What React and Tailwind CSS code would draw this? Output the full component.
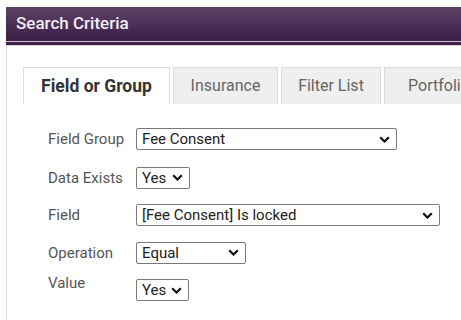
import React from 'react';

function Chevron() {
    return (
        <svg width="11" height="7" viewBox="0 0 11 7" className="shrink-0">
            <path d="M1.2 1.2l4.3 4.3 4.3-4.3" fill="none" stroke="#111" strokeWidth="2.2" />
        </svg>
    );
}

function FakeSelect({ value, width }) {
    return (
        <div
            className="flex h-[22px] items-center justify-between rounded-[2px] border border-[#7a7a7a] bg-white pr-[6px] pl-[5px] text-[15px] text-[#222]"
            style={{ width }}
        >
            <span className="whitespace-nowrap">{value}</span>
            <Chevron />
        </div>
    );
}

function Row({ label, value, width, top = false, className = '' }) {
    return (
        <div className={`flex ${top ? 'items-start' : 'items-center'} ${className}`}>
            <div className={`w-[88px] text-[15px] text-[#555] ${top ? '-mt-[7px]' : ''}`}>{label}</div>
            <FakeSelect value={value} width={width} />
        </div>
    );
}

const tabs = [
    { name: 'Field or Group', width: 147, active: true },
    { name: 'Insurance', width: 105 },
    { name: 'Filter List', width: 100 },
    { name: 'Portfolio', width: 110 },
];

export default function App() {
    return (
        <div className="h-[320px] w-[461px] overflow-hidden bg-white font-['Roboto',sans-serif]">
            <div className="ml-[6px] pt-[7px]">
                <div className="flex h-[34px] items-center bg-gradient-to-b from-[#5d4268] to-[#3c1e46] pl-[10px] text-[17px] font-medium text-[#f2eef4]">
                    Search Criteria
                </div>
                <div className="h-[1px] bg-[#cbbfd0]" />
                <div className="h-[3px] bg-[#3e2149]" />
                <div className="h-[1px] bg-[#d8d0dc]" />
                <div className="h-[300px] border-l border-[#dedede] pt-[21px]">
                    <div className="flex gap-[3px] pl-[16px]">
                        {tabs.map((tab) => (
                            <div
                                key={tab.name}
                                className={`flex h-[37px] shrink-0 items-center justify-center border border-b-0 whitespace-nowrap ${
                                    tab.active
                                        ? 'border-[#dcdcdc] bg-white text-[17.5px] font-bold text-[#333]'
                                        : 'border-[#dcdcdc] bg-[#efefef] text-[16px] text-[#666]'
                                }`}
                                style={{ width: tab.width }}
                            >
                                {tab.name}
                            </div>
                        ))}
                    </div>
                    <div className="flex flex-col pt-[24px] pl-[41px]">
                        <Row label="Field Group" value="Fee Consent" width={261} />
                        <Row label="Data Exists" value="Yes" width={54} className="mt-[16px]" />
                        <Row label="Field" value="[Fee Consent] Is locked" width={304} className="mt-[15px]" />
                        <Row label="Operation" value="Equal" width={110} className="mt-[15px]" />
                        <Row label="Value" value="Yes" width={53} top className="mt-[15px]" />
                    </div>
                </div>
            </div>
        </div>
    );
}
